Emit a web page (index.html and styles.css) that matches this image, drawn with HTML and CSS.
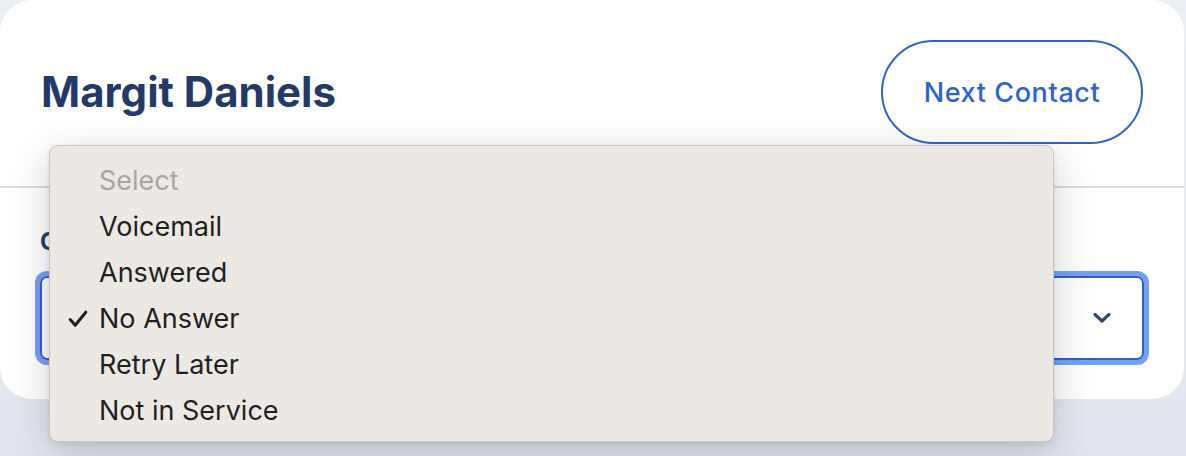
FILE: index.html
```html
<!DOCTYPE html>
<html lang="en">
<head>
<meta charset="utf-8">
<title>Contact</title>
<link rel="stylesheet" href="styles.css">
</head>
<body>
<div class="card">
  <header class="card-header">
    <h1 class="contact-name">Margit Daniels</h1>
    <button class="next-btn" type="button">Next Contact</button>
  </header>
  <section class="card-body">
    <label class="field-label">Call Outcome</label>
    <div class="select-box">
      <span class="select-value"></span>
      <svg class="chevron" width="20" height="12" viewBox="0 0 20 12" aria-hidden="true">
        <path d="M3 2.5 L10 9 L17 2.5" fill="none" stroke="currentColor" stroke-width="3.2" stroke-linecap="round" stroke-linejoin="round"/>
      </svg>
    </div>
  </section>
  <ul class="menu">
    <li class="menu-item placeholder"><span class="check"></span>Select</li>
    <li class="menu-item"><span class="check"></span>Voicemail</li>
    <li class="menu-item"><span class="check"></span>Answered</li>
    <li class="menu-item"><span class="check"><svg width="20" height="18" viewBox="0 0 20 18" aria-hidden="true"><path d="M2.2 9.5 L7.2 15.3 L17.8 2.2" fill="none" stroke="currentColor" stroke-width="3" stroke-linecap="round" stroke-linejoin="round"/></svg></span>No Answer</li>
    <li class="menu-item"><span class="check"></span>Retry Later</li>
    <li class="menu-item"><span class="check"></span>Not in Service</li>
  </ul>
</div>
</body>
</html>
```

FILE: styles.css
```css
* { box-sizing: border-box; }

body {
  margin: 0;
  width: 1186px;
  height: 456px;
  overflow: hidden;
  background: linear-gradient(180deg, #eceef5 0%, #e3e6ee 100%);
  font-family: Inter, "Noto Sans", "DejaVu Sans", sans-serif;
}

.card {
  position: relative;
  width: 1184px;
  height: 399px;
  background: #ffffff;
  border-radius: 32px;
}

.card-header {
  display: flex;
  align-items: center;
  justify-content: space-between;
  height: 188px;
  padding: 40px 41px 42px 41px;
  border-bottom: 2px solid #d9dce7;
}

.contact-name {
  margin: 0;
  font-size: 42px;
  font-weight: 700;
  letter-spacing: 0;
  color: #223a67;
  line-height: 1.2;
}

.next-btn {
  width: 262px;
  height: 104px;
  border: 2px solid #2f63cc;
  border-radius: 52px;
  background: #ffffff;
  color: #2b63d3;
  font-family: Inter, "Noto Sans", sans-serif;
  font-size: 27px;
  font-weight: 500;
  letter-spacing: 0.6px;
  padding: 0;
}

.card-body {
  display: flex;
  flex-direction: column;
  padding: 39px 40px 0 40px;
}

.field-label {
  font-size: 24px;
  font-weight: 700;
  line-height: 30px;
  color: #223a67;
}

.select-box {
  margin-top: 19px;
  height: 84px;
  display: flex;
  align-items: center;
  justify-content: space-between;
  padding: 0 30px 0 24px;
  border: 2px solid #2d5fcf;
  border-radius: 7px;
  box-shadow: 0 0 0 5px #779ff1;
  font-size: 26px;
  color: #223a67;
}

.chevron {
  color: #34466b;
}

.menu {
  position: absolute;
  left: 49px;
  top: 145px;
  width: 1005px;
  height: 297px;
  margin: 0;
  padding: 12px 0 0 0;
  list-style: none;
  background: #ece9e5;
  border: 1px solid #c9c6c2;
  border-radius: 9px;
  box-shadow: 0 12px 40px rgba(40, 44, 60, 0.22), 0 2px 6px rgba(0, 0, 0, 0.08);
}

.menu-item {
  display: flex;
  align-items: center;
  height: 46px;
  font-size: 27px;
  line-height: 46px;
  color: #1f1f1f;
  letter-spacing: 0;
}

.menu-item.placeholder {
  color: #a8a5a2;
}

.check {
  display: flex;
  align-items: center;
  width: 49px;
  padding-left: 18px;
  color: #1f1f1f;
}
```
